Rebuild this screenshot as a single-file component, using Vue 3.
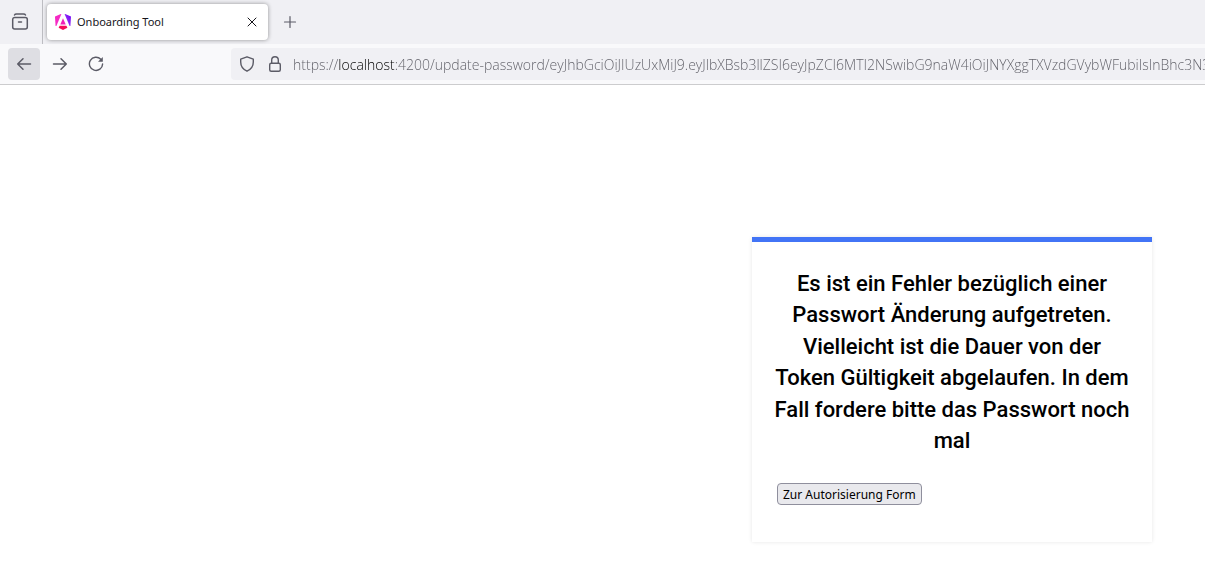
<script setup>
import { ref } from 'vue'

const address = ref(
  'https://localhost:4200/update-password/eyJhbGciOiJIUzUxMiJ9.eyJlbXBsb3llZSI6eyJpZCI6MTI2NSwibG9naW4iOiJNYXggTXVzdGVybWFubiIsInBhc3N3b3JkIjoi'
)
</script>

<template>
  <div class="browser">
    <header class="tab-strip">
      <button class="icon-button view" type="button" aria-label="Firefox View">
        <svg width="20" height="20" viewBox="0 0 20 20" fill="none" stroke="#5b5b66" stroke-width="1.5" stroke-linecap="round" stroke-linejoin="round">
          <path d="M4.500 3Q5 2 6.500 2h7Q15 2 15.500 3" />
          <path d="M2.700 9V7.500a2 2 0 0 1 2-2h10.600a2 2 0 0 1 2 2V15a2 2 0 0 1-2 2H4.700a2 2 0 0 1-2-2zM8.500 10h3" />
        </svg>
      </button>
      <div class="tab">
        <svg class="favicon" width="16" height="16" viewBox="0 0 16 16">
          <defs>
            <linearGradient id="shield" x1="0" y1="1" x2="1" y2="0">
              <stop offset="0" stop-color="#b42cf0" />
              <stop offset="0.500" stop-color="#8a23f5" />
              <stop offset="1" stop-color="#6c00f5" />
            </linearGradient>
          </defs>
          <path d="M16 2.400l-.6 9.600h-.8L9.600 0h.6z" fill="url(#shield)" />
          <path d="M6.400 0L1.400 12H.6L0 2.400 5.800 0z" fill="#f52ac4" />
          <path d="M8 4.200l2.700 6.200H5.300z" fill="#f01fb8" />
          <path d="M4.600 11.800h6.800l1 1.900L8 16l-4.400-2.300z" fill="#f60a5c" />
        </svg>
        <span class="tab-title">Onboarding Tool</span>
        <button class="close" type="button" aria-label="Close tab">
          <svg width="10" height="10" viewBox="0 0 10 10" stroke="#15141a" stroke-width="1" stroke-linecap="round">
            <path d="M1 1l8 8M9 1L1 9" />
          </svg>
        </button>
      </div>
      <button class="icon-button" type="button" aria-label="New tab">
        <svg width="14" height="14" viewBox="0 0 14 14" stroke="#5b5b66" stroke-width="1.200" stroke-linecap="round">
          <path d="M7 1.500v11M1.500 7h11" />
        </svg>
      </button>
    </header>

    <nav class="toolbar" aria-label="Navigation">
      <button class="icon-button back" type="button" aria-label="Back">
        <svg width="16" height="16" viewBox="0 0 16 16" fill="none" stroke="#5b5b66" stroke-width="1.500" stroke-linecap="round" stroke-linejoin="round">
          <path d="M14.500 8H1.700M7 2.700L1.700 8 7 13.300" />
        </svg>
      </button>
      <button class="icon-button" type="button" aria-label="Forward">
        <svg width="16" height="16" viewBox="0 0 16 16" fill="none" stroke="#5b5b66" stroke-width="1.500" stroke-linecap="round" stroke-linejoin="round">
          <path d="M1.500 8h12.800M9 2.700L14.300 8 9 13.300" />
        </svg>
      </button>
      <button class="icon-button" type="button" aria-label="Reload">
        <svg width="16" height="16" viewBox="0 0 16 16" fill="none" stroke="#5b5b66" stroke-width="1.400" stroke-linecap="round">
          <path d="M12.800 3.300A6.600 6.600 0 1 0 14.600 8" />
          <path d="M14.800 1v4.800H10z" fill="#5b5b66" stroke="none" />
        </svg>
      </button>
      <div class="address">
        <svg width="16" height="16" viewBox="0 0 16 16" fill="none" stroke="#5b5b66" stroke-width="1.400" stroke-linejoin="round">
          <path d="M8 .8L14.300 3.100V6c0 4-2.400 7.400-6.300 9.200C4.100 13.400 1.700 10 1.700 6V3.100z" />
        </svg>
        <svg width="16" height="16" viewBox="0 0 16 16" fill="none" stroke="#5b5b66" stroke-width="1.400">
          <rect x="2.700" y="7.200" width="10.600" height="8" rx="1.500" />
          <path d="M4.700 7V4a3.300 3.300 0 0 1 6.600 0v3" />
        </svg>
        <input v-model="address" class="address-input" type="text" aria-label="Address" spellcheck="false" />
      </div>
    </nav>

    <main class="page">
      <section class="card">
        <h2 class="message">
          Es ist ein Fehler bezüglich einer Passwort Änderung aufgetreten. Vielleicht ist die Dauer von der Token
          Gültigkeit abgelaufen. In dem Fall fordere bitte das Passwort noch mal
        </h2>
        <button class="action" type="button">Zur Autorisierung Form</button>
      </section>
    </main>
  </div>
</template>

<style>
body {
  background: #fff;
}
</style>

<style scoped>
.browser {
  overflow: hidden;
  font-family: "Noto Sans", "Open Sans", sans-serif;
  color: #15141a;
}

.browser svg {
  display: block;
  flex: none;
}

.tab-strip {
  display: flex;
  align-items: center;
  height: 44px;
  background: #f0f0f4;
}

.icon-button {
  display: flex;
  align-items: center;
  justify-content: center;
  flex: none;
  width: 32px;
  height: 32px;
  padding: 0;
  border: 0;
  border-radius: 4px;
  background: transparent;
}

.view {
  width: 43px;
  height: 44px;
  padding-right: 2px;
  border-right: 1px solid #bdbdc2;
  border-radius: 0;
}

.tab {
  display: flex;
  align-items: center;
  box-sizing: border-box;
  width: 221px;
  height: 36px;
  margin: 0 6px 0 4px;
  padding: 0 8px;
  border-radius: 4px;
  background: #fff;
  box-shadow: 0 0 4px rgba(0, 0, 0, 0.4);
}

.tab-title {
  flex: 1;
  margin-left: 6px;
  font-size: 11px;
  line-height: 16px;
}

.close {
  padding: 3px;
  border: 0;
  background: transparent;
}

.toolbar {
  display: flex;
  align-items: center;
  gap: 4px;
  height: 40px;
  padding-left: 8px;
  border-bottom: 1px solid #ccccce;
  background: #f9f9fb;
}

.back {
  background: #dedee3;
}

.address {
  display: flex;
  align-items: center;
  flex: 1;
  gap: 12px;
  min-width: 0;
  height: 32px;
  margin-left: 115px;
  padding-left: 8px;
  border-radius: 4px 0 0 4px;
  background: #f0f0f4;
}

.address-input {
  flex: 1;
  min-width: 0;
  height: 24px;
  margin-left: -2px;
  padding: 0;
  border: 0;
  outline: 0;
  background: linear-gradient(90deg, #5e5e66 45px, #000 45px, #000 101px, #5e5e66 101px);
  background-clip: text;
  color: transparent;
  font-family: "Open Sans", "Noto Sans", sans-serif;
  font-size: 14px;
  font-weight: 300;
  line-height: 20px;
}

.page {
  display: flex;
  justify-content: flex-end;
  padding: 152px 53px 45px;
}

.card {
  box-sizing: border-box;
  width: 400px;
  padding: 26px 25px 37px;
  border-top: 5px solid #4274f6;
  background: #fff;
  box-shadow: 0 0 4px rgba(0, 0, 0, 0.1);
}

.message {
  margin: 0 -4px 26px;
  color: #000;
  font-family: Roboto, sans-serif;
  font-size: 22px;
  font-weight: 500;
  line-height: 1.43;
  text-align: center;
}

.action {
  display: block;
  height: 22px;
  padding: 1px 5px 0;
  border: 1px solid #8f8f9d;
  border-radius: 4px;
  background: #e9e9ed;
  color: #000;
  font-family: "Noto Sans", "Open Sans", sans-serif;
  font-size: 12px;
  line-height: 20px;
}
</style>
